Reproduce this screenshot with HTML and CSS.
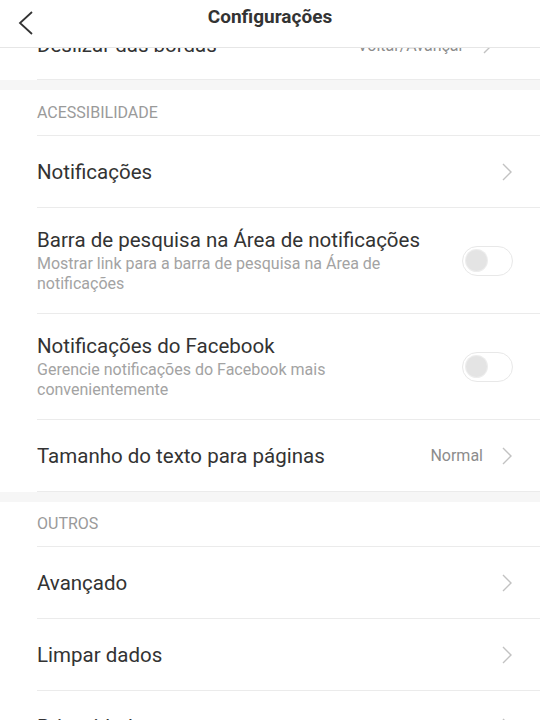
FILE: index.html
```html
<!DOCTYPE html>
<html>
	<head>
		<meta charset="utf-8">
		<title>Configurações</title>
		<link rel="stylesheet" href="styles.css">
	</head>
	<body>
		<div class="app">
			<div class="topbar">
				<div class="back">
					<svg width="16" height="24" viewBox="0 0 16 24"><polyline points="14,1 2,12 14,23" fill="none" stroke="#333" stroke-width="1.8"/></svg>
				</div>
				<div class="title">Configurações</div>
				<div></div>
			</div>

			<div class="scroll">
				<div class="list">
					<div class="section">
						<div class="item">
							<div class="item-inner shifted">
								<div class="text"><div class="label">Deslizar das bordas</div></div>
								<span class="value">Voltar/Avançar</span>
								<svg class="chev" width="10" height="18" viewBox="0 0 10 18"><polyline points="1,1 9,9 1,17" fill="none" stroke="#c2c2c2" stroke-width="1.4"/></svg>
							</div>
						</div>
					</div>

					<div class="section">
						<div class="head"><div class="head-inner">ACESSIBILIDADE</div></div>
						<div class="item">
							<div class="item-inner">
								<div class="text"><div class="label">Notificações</div></div>
								<svg class="chev" width="10" height="18" viewBox="0 0 10 18"><polyline points="1,1 9,9 1,17" fill="none" stroke="#c2c2c2" stroke-width="1.4"/></svg>
							</div>
						</div>
						<div class="item tall">
							<div class="item-inner">
								<div class="text">
									<div class="label">Barra de pesquisa na Área de notificações</div>
									<div class="sub">Mostrar link para a barra de pesquisa na Área de notificações</div>
								</div>
								<span class="switch"><span class="knob"></span></span>
							</div>
						</div>
						<div class="item tall">
							<div class="item-inner">
								<div class="text">
									<div class="label">Notificações do Facebook</div>
									<div class="sub">Gerencie notificações do Facebook mais convenientemente</div>
								</div>
								<span class="switch"><span class="knob"></span></span>
							</div>
						</div>
						<div class="item">
							<div class="item-inner">
								<div class="text"><div class="label">Tamanho do texto para páginas</div></div>
								<span class="value">Normal</span>
								<svg class="chev" width="10" height="18" viewBox="0 0 10 18"><polyline points="1,1 9,9 1,17" fill="none" stroke="#c2c2c2" stroke-width="1.4"/></svg>
							</div>
						</div>
					</div>

					<div class="section">
						<div class="head"><div class="head-inner short">OUTROS</div></div>
						<div class="item">
							<div class="item-inner">
								<div class="text"><div class="label">Avançado</div></div>
								<svg class="chev" width="10" height="18" viewBox="0 0 10 18"><polyline points="1,1 9,9 1,17" fill="none" stroke="#c2c2c2" stroke-width="1.4"/></svg>
							</div>
						</div>
						<div class="item">
							<div class="item-inner">
								<div class="text"><div class="label">Limpar dados</div></div>
								<svg class="chev" width="10" height="18" viewBox="0 0 10 18"><polyline points="1,1 9,9 1,17" fill="none" stroke="#c2c2c2" stroke-width="1.4"/></svg>
							</div>
						</div>
						<div class="item">
							<div class="item-inner">
								<div class="text"><div class="label">Privacidade e segurança</div></div>
								<svg class="chev" width="10" height="18" viewBox="0 0 10 18"><polyline points="1,1 9,9 1,17" fill="none" stroke="#c2c2c2" stroke-width="1.4"/></svg>
							</div>
						</div>
					</div>
				</div>
			</div>
		</div>
	</body>
</html>
```

FILE: styles.css
```css
body {
	margin: 0;
	background: #FFFFFF;
	font-family: Roboto, "Noto Sans", Arial, sans-serif;
	color: #333333;
	overflow: hidden;
}
.app {
	display: flex;
	flex-direction: column;
	height: 720px;
}
.topbar {
	display: grid;
	grid-template-columns: 1fr auto 1fr;
	align-items: center;
	height: 47px;
	border-bottom: 1px solid #E6E6E6;
	background: #FFFFFF;
	flex-shrink: 0;
}
.back {
	display: flex;
	padding-left: 18px;
	margin-top: -1px;
}
.title {
	font-size: 19px;
	font-weight: bold;
	color: #333333;
	margin-top: -15px;
}
.scroll {
	flex: 1;
	overflow: hidden;
}
.list {
	margin-top: -40px;
}
.section {
	border-bottom: 10px solid #F6F6F6;
}
.head {
	padding-left: 37px;
}
.head-inner {
	height: 45px;
	line-height: 45px;
	border-bottom: 1px solid #EBEBEB;
	font-size: 16px;
	color: #9A9A9A;
}
.head-inner.short {
	height: 44px;
	line-height: 44px;
}
.item {
	padding-left: 37px;
}
.item-inner {
	display: flex;
	align-items: center;
	height: 71px;
	padding-right: 28px;
	border-bottom: 1px solid #EBEBEB;
}
.item-inner.shifted {
	padding-right: 47px;
	padding-top: 3px;
	height: 68px;
}
.item.tall .item-inner {
	height: 105px;
	padding-right: 27px;
}
.text {
	flex: 1;
	min-width: 0;
}
.label {
	font-size: 20.5px;
	line-height: 26px;
	color: #333333;
}
.sub {
	font-size: 16px;
	line-height: 20px;
	color: #A3A3A3;
	margin-top: 1px;
}
.value {
	font-size: 16px;
	color: #8C8C8C;
	margin-right: 19px;
}
.chev {
	display: block;
}
.switch {
	box-sizing: border-box;
	display: flex;
	align-items: center;
	width: 51px;
	height: 30px;
	margin-left: 24px;
	padding-left: 3px;
	border: 1px solid #E8E8E8;
	border-radius: 15px;
	background: #FFFFFF;
}
.knob {
	width: 21px;
	height: 21px;
	border-radius: 50%;
	background: #E4E4E4;
	box-shadow: 0 0 0 1px #EDEDED;
}
```
